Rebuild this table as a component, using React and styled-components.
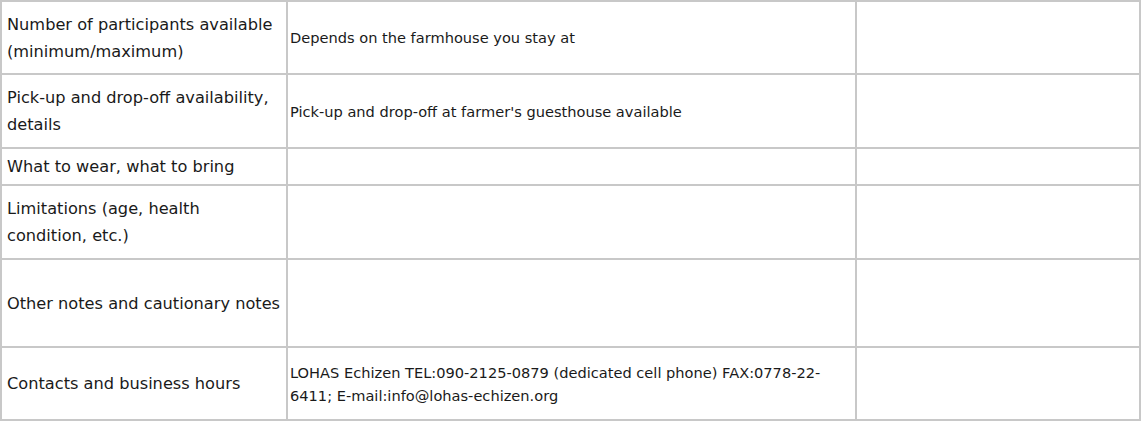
import React from "react";
import styled, { createGlobalStyle } from "styled-components";

const Global = createGlobalStyle`
  html, body {
    margin: 0;
    padding: 0;
    background: #ffffff;
  }
`;

const Table = styled.table`
  width: 1141px;
  border-collapse: collapse;
  table-layout: fixed;
  color: #1a1a1a;
`;

const Row = styled.tr`
  height: ${(props) => props.h}px;
`;

const Label = styled.th`
  width: 275px;
  border: 2px solid #c8c8c8;
  padding: 4px 4px 4px 5px;
  text-align: left;
  font-weight: normal;
  font-family: "DejaVu Sans", Verdana, sans-serif;
  font-size: 16.2px;
  line-height: 27px;
  vertical-align: middle;
`;

const Cell = styled.td`
  width: ${(props) => (props.w ? `${props.w}px` : "auto")};
  border: 2px solid #c8c8c8;
  padding: 4px 4px 4px 2px;
  font-family: "DejaVu Sans", Tahoma, sans-serif;
  font-size: 14.6px;
  line-height: 23px;
  vertical-align: middle;
`;

const rows = [
  { label: "Number of participants available (minimum/maximum)", value: "Depends on the farmhouse you stay at", h: 73 },
  { label: "Pick-up and drop-off availability, details", value: "Pick-up and drop-off at farmer's guesthouse available", h: 74 },
  { label: "What to wear, what to bring", value: "", h: 37 },
  { label: "Limitations (age, health condition, etc.)", value: "", h: 74 },
  { label: "Other notes and cautionary notes", value: "", h: 88 },
  {
    label: "Contacts and business hours",
    value: "LOHAS Echizen TEL:090-2125-0879 (dedicated cell phone) FAX:0778-22-6411; E-mail:info@lohas-echizen.org",
    h: 73,
  },
];

export default function App() {
  return (
    <>
      <Global />
      <Table>
        <tbody>
          {rows.map((r) => (
            <Row key={r.label} h={r.h}>
              <Label>{r.label}</Label>
              <Cell w={561}>{r.value}</Cell>
              <Cell></Cell>
            </Row>
          ))}
        </tbody>
      </Table>
    </>
  );
}
